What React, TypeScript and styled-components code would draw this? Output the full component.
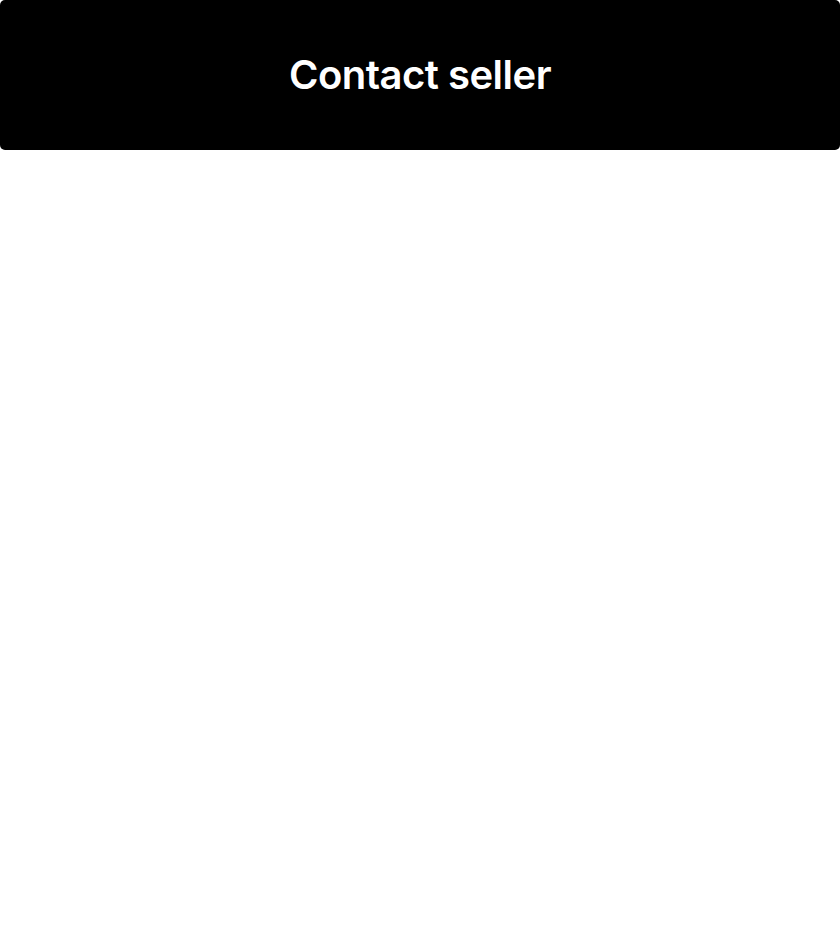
import React from "react";
import styled, { createGlobalStyle } from "styled-components";

const Global = createGlobalStyle`
  html, body { margin: 0; padding: 0; background: #ffffff; }
  body { font-family: Inter, "Liberation Sans", Arial, sans-serif; }
`;

const Page = styled.div`
  width: 840px;
  height: 930px;
  background: #ffffff;
`;

const Button = styled.button`
  display: flex;
  align-items: center;
  justify-content: center;
  width: 840px;
  height: 150px;
  margin: 0;
  padding: 0 0 2px 0;
  border: none;
  border-radius: 5px;
  background: #000000;
  color: #ffffff;
  font-family: Inter, "Liberation Sans", Arial, sans-serif;
  font-size: 40px;
  font-weight: 600;
  letter-spacing: -0.5px;
  cursor: pointer;
`;

export default function App() {
  return (
    <>
      <Global />
      <Page>
        <Button type="button">Contact seller</Button>
      </Page>
    </>
  );
}
